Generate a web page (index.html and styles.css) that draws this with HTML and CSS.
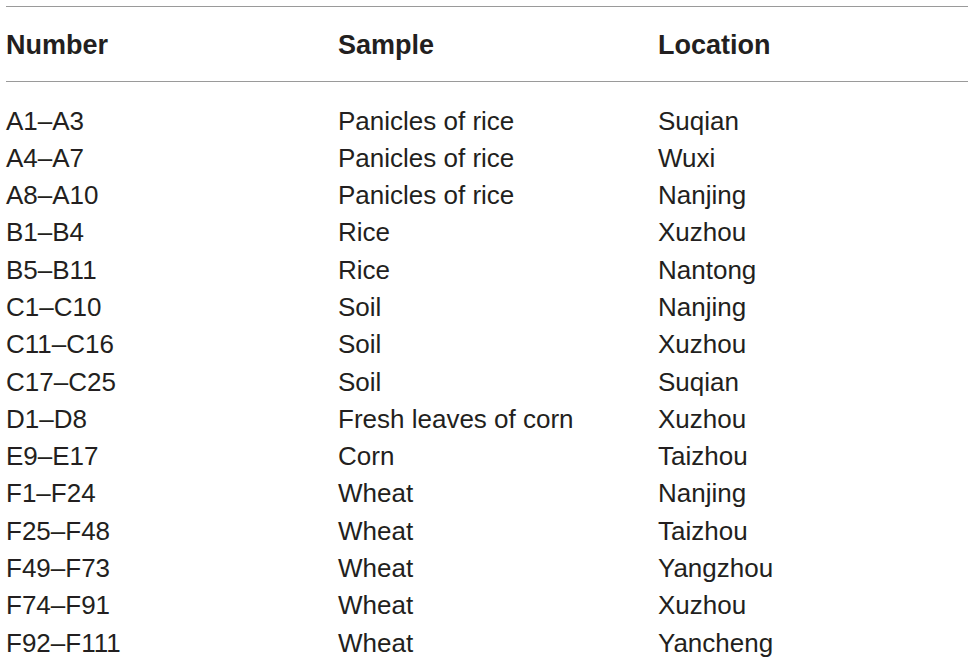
FILE: index.html
```html
<!DOCTYPE html>
<html>
<head>
<meta charset="utf-8">
<link rel="stylesheet" href="styles.css">
</head>
<body>
<div class="wrap">
<table class="data">
<thead>
<tr><th class="c1">Number</th><th class="c2">Sample</th><th class="c3">Location</th></tr>
</thead>
<tbody>
<tr class="first"><td>A1–A3</td><td>Panicles of rice</td><td>Suqian</td></tr>
<tr><td>A4–A7</td><td>Panicles of rice</td><td>Wuxi</td></tr>
<tr><td>A8–A10</td><td>Panicles of rice</td><td>Nanjing</td></tr>
<tr><td>B1–B4</td><td>Rice</td><td>Xuzhou</td></tr>
<tr><td>B5–B11</td><td>Rice</td><td>Nantong</td></tr>
<tr><td>C1–C10</td><td>Soil</td><td>Nanjing</td></tr>
<tr><td>C11–C16</td><td>Soil</td><td>Xuzhou</td></tr>
<tr><td>C17–C25</td><td>Soil</td><td>Suqian</td></tr>
<tr><td>D1–D8</td><td>Fresh leaves of corn</td><td>Xuzhou</td></tr>
<tr><td>E9–E17</td><td>Corn</td><td>Taizhou</td></tr>
<tr><td>F1–F24</td><td>Wheat</td><td>Nanjing</td></tr>
<tr><td>F25–F48</td><td>Wheat</td><td>Taizhou</td></tr>
<tr><td>F49–F73</td><td>Wheat</td><td>Yangzhou</td></tr>
<tr><td>F74–F91</td><td>Wheat</td><td>Xuzhou</td></tr>
<tr><td>F92–F111</td><td>Wheat</td><td>Yancheng</td></tr>
</tbody>
</table>
</div>
</body>
</html>
```
FILE: styles.css
```css
html, body {
  margin: 0;
  padding: 0;
  background: #ffffff;
}
.wrap {
  padding: 6px 6px 0 6px;
}
.data {
  width: 962px;
  border-collapse: collapse;
  table-layout: fixed;
  font-family: "Liberation Sans", Arial, sans-serif;
  color: #231f20;
}
.data thead tr {
  border-top: 1.5px solid #9a9a9a;
  border-bottom: 1.5px solid #9a9a9a;
}
.data th {
  text-align: left;
  font-weight: bold;
  font-size: 27px;
  line-height: 30px;
  padding: 23px 0 21px 0;
}
.data .c1 { width: 332px; }
.data .c2 { width: 320px; }
.data td {
  font-size: 26px;
  line-height: 37.3px;
  padding: 0;
  white-space: nowrap;
}
.data tbody tr.first td {
  padding-top: 20.5px;
}
```
